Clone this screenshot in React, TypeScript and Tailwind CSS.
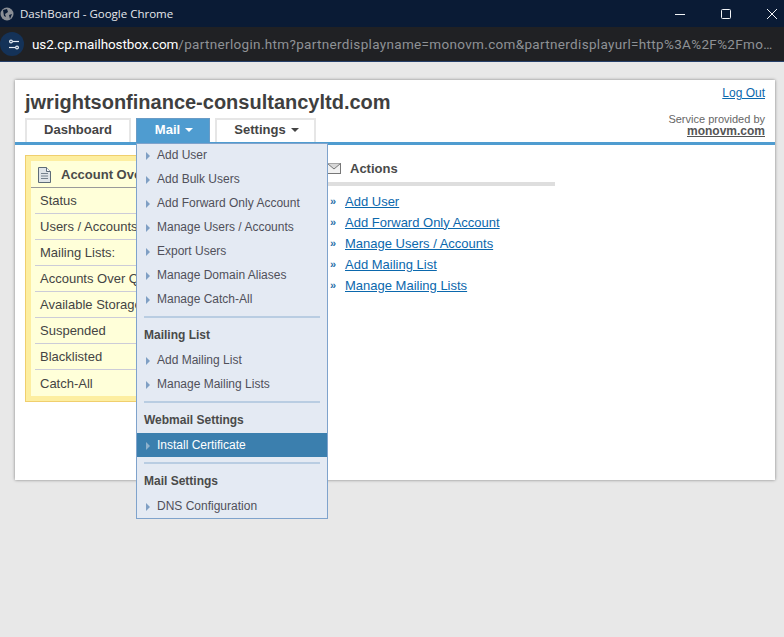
const sans = "font-['Liberation_Sans',Arial,sans-serif]";

const stats = [
  "Status",
  "Users / Accounts",
  "Mailing Lists:",
  "Accounts Over Quota",
  "Available Storage",
  "Suspended",
  "Blacklisted",
  "Catch-All",
];

const actions = [
  "Add User",
  "Add Forward Only Account",
  "Manage Users / Accounts",
  "Add Mailing List",
  "Manage Mailing Lists",
];

function MenuItem({ label, active }: { label: string; active?: boolean }) {
  return (
    <div
      className={`h-6 flex items-center pl-[9px] text-[12px] ${
        active ? "bg-[#3b7fae] text-white" : "text-[#50505a]"
      }`}
    >
      <svg width="4" height="8" viewBox="0 0 4 8" className="mr-[7px] mt-px shrink-0">
        <path d="M0 0 L4 4 L0 8 Z" fill={active ? "#8fb2cc" : "#7f9fc4"} />
      </svg>
      <span>{label}</span>
    </div>
  );
}

function MenuHeading({ label }: { label: string }) {
  return <div className="h-6 pl-[7px] flex items-center text-[12px] font-bold text-[#4a4a4a]">{label}</div>;
}

function MenuDivider() {
  return <div className="mx-[7px] mt-[5px] h-[2px] bg-[#b9cde2]" />;
}

function MailMenu() {
  return (
    <div className="absolute left-0 top-[25px] w-[192px] h-[376px] z-10 bg-[#e4eaf3] border border-[#7fa3cc]">
      <div className="-mt-px">
        <MenuItem label="Add User" />
        <MenuItem label="Add Bulk Users" />
        <MenuItem label="Add Forward Only Account" />
        <MenuItem label="Manage Users / Accounts" />
        <MenuItem label="Export Users" />
        <MenuItem label="Manage Domain Aliases" />
        <MenuItem label="Manage Catch-All" />
      </div>
      <MenuDivider />
      <div className="mt-[5px]">
        <MenuHeading label="Mailing List" />
      </div>
      <div className="mt-[1px]">
        <MenuItem label="Add Mailing List" />
        <MenuItem label="Manage Mailing Lists" />
      </div>
      <MenuDivider />
      <div className="mt-[5px]">
        <MenuHeading label="Webmail Settings" />
      </div>
      <div className="mt-[1px]">
        <MenuItem label="Install Certificate" active />
      </div>
      <MenuDivider />
      <div className="mt-[5px]">
        <MenuHeading label="Mail Settings" />
      </div>
      <div className="mt-[1px]">
        <MenuItem label="DNS Configuration" />
      </div>
    </div>
  );
}

function Caret({ color }: { color: string }) {
  return (
    <svg width="8" height="4" viewBox="0 0 8 4" className="ml-[5px] mt-px">
      <path d="M0 0 L8 0 L4 4 Z" fill={color} />
    </svg>
  );
}

export default function App() {
  return (
    <div className={`w-[784px] h-[637px] overflow-hidden bg-[#e8e8e8] ${sans}`}>
      <div className="h-[27px] bg-[#0a1b35] flex items-center text-white">
        <svg width="14" height="14" viewBox="0 0 14 14" className="shrink-0">
          <circle cx="7" cy="7" r="6.5" fill="#8b8f96" />
          <path d="M3 3 L7 2 L8 5 L5 7 L6 10 L4 9 Z M9 8 L12 7 L10 12 Z" fill="#0a1b35" />
        </svg>
        <span className="ml-[6px] text-[11.5px] font-['Open_Sans',sans-serif] text-[#e6e8ec]">DashBoard - Google Chrome</span>
        <div className="ml-auto mr-[7px] flex items-center gap-[36px]">
          <svg width="10" height="10" viewBox="0 0 10 10" stroke="#f2f4f7" fill="none">
            <path d="M0 5.5 H10" />
          </svg>
          <svg width="10" height="10" viewBox="0 0 10 10" stroke="#f2f4f7" fill="none">
            <rect x=".5" y=".5" width="9" height="9" rx="1" />
          </svg>
          <svg width="10" height="10" viewBox="0 0 10 10" stroke="#f2f4f7" fill="none">
            <path d="M0 0 L10 10 M10 0 L0 10" />
          </svg>
        </div>
      </div>
      <div className="h-[35px] bg-[#202124] border-b border-[#27406a] flex items-center font-['Roboto',sans-serif] text-[13.5px]">
        <div className="w-6 h-6 rounded-full bg-[#143258] flex items-center pl-[9px] shrink-0">
          <svg width="10" height="11" viewBox="0 0 10 11" fill="none" stroke="#e6ebf2" strokeWidth="1.2">
            <circle cx="2" cy="2.5" r="1.4" />
            <path d="M4 2.5 H10" />
            <path d="M0 8.5 H6" />
            <circle cx="8" cy="8.5" r="1.4" />
          </svg>
        </div>
        <span className="ml-2 whitespace-nowrap overflow-hidden w-[745px] text-[#8f9296] tracking-[0.33px]">
          <span className="text-white tracking-[-0.08px]">us2.cp.mailhostbox.com</span>
          /partnerlogin.htm?partnerdisplayname=monovm.com&amp;partnerdisplayurl=http%3A%2F%2Fmo…
        </span>
      </div>

      <div className="ml-[15px] mt-[18px] w-[760px] h-[400px] bg-white shadow-[0_0_3px_rgba(0,0,0,0.45)]">
        <div className="relative h-[62px] px-[10px] flex justify-between">
          <div>
            <h1 className="pt-[10px] text-[20px] leading-[24px] font-bold text-[#3f3f3f]">jwrightsonfinance-consultancyltd.com</h1>
            <div className="mt-1 flex gap-[5px]">
              <div className="w-[106px] h-6 pb-[3px] border-2 border-b-0 border-[#e6e6e6] flex items-center justify-center text-[13px] font-bold text-[#444]">
                Dashboard
              </div>
              <div className="relative">
                <div className="w-[74px] h-6 pb-[2px] pl-[2px] bg-[#4f9cd0] border border-b-0 border-[#6a9cc6] flex items-center justify-center text-[13px] font-bold text-white">
                  Mail
                  <Caret color="#ffffff" />
                </div>
                <MailMenu />
              </div>
              <div className="w-[101px] h-6 pb-[3px] pl-[2px] border-2 border-b-0 border-[#e6e6e6] flex items-center justify-center text-[13px] font-bold text-[#444]">
                Settings
                <Caret color="#444444" />
              </div>
            </div>
          </div>
          <div className="flex flex-col items-end">
            <a href="#" className="mt-[6px] text-[12px] leading-[14px] text-[#0b68ad] underline">Log Out</a>
            <span className="mt-[13px] text-[11px] leading-[12px] text-[#666]">Service provided by</span>
            <a href="#" className="text-[12px] leading-[13px] font-bold text-[#555] underline">monovm.com</a>
          </div>
        </div>
        <div className="h-[3px] bg-[#4f9cd0]" />

        <div className="flex px-[10px] pt-[10px]">
          <div className="w-[292px] h-[247px] shrink-0 border border-[#f0cf6e] bg-[#fdeea0] p-[5px]">
            <div className="h-full bg-[#ffffd9]">
              <div className="h-[27px] pt-px flex items-center pl-[7px] border-b border-[#9a9a9a]">
                <svg width="13" height="16" viewBox="0 0 13 16" className="mr-[10px] shrink-0">
                  <path d="M.5 .5 H8.5 L12.5 4.5 V15.5 H.5 Z" fill="#dfe4e8" stroke="#5d6b78" />
                  <path d="M8.5 .5 V4.5 H12.5" fill="#f6f7f8" stroke="#5d6b78" />
                  <path d="M3 6.5 H10 M3 9 H10 M3 11.5 H10" stroke="#76828e" />
                </svg>
                <span className="text-[13px] font-bold text-[#4a4a4a] whitespace-nowrap">Account Overview</span>
              </div>
              {stats.map((s, i) => (
                <div
                  key={s}
                  className={`mx-1 h-[26px] pt-px flex items-center pl-[5px] text-[13px] text-[#444] ${
                    i < stats.length - 1 ? "border-b border-[#ccccd8]" : ""
                  }`}
                >
                  {s}
                </div>
              ))}
            </div>
          </div>

          <div className="ml-[10px] w-[228px]">
            <div className="h-[27px] flex items-center border-b-[4px] border-[#dedede] box-content">
              <svg width="14" height="11" viewBox="0 0 14 11" className="mr-[9px] shrink-0">
                <rect x=".5" y=".5" width="13" height="10" fill="#f2f2f2" stroke="#777" />
                <path d="M.5 .5 L7 6 L13.5 .5" fill="#d8d8d8" stroke="#777" />
              </svg>
              <span className="text-[13px] font-bold text-[#4a4a4a]">Actions</span>
            </div>
            <div className="mt-[5px]">
              {actions.map((a) => (
                <div key={a} className="h-[21px] flex items-center text-[13px]">
                  <span className="w-[18px] pl-[3px] text-[11px] font-bold text-[#2a6fa8]">»</span>
                  <a href="#" className="text-[#0b68ad] underline">{a}</a>
                </div>
              ))}
            </div>
          </div>
        </div>
      </div>
    </div>
  );
}
